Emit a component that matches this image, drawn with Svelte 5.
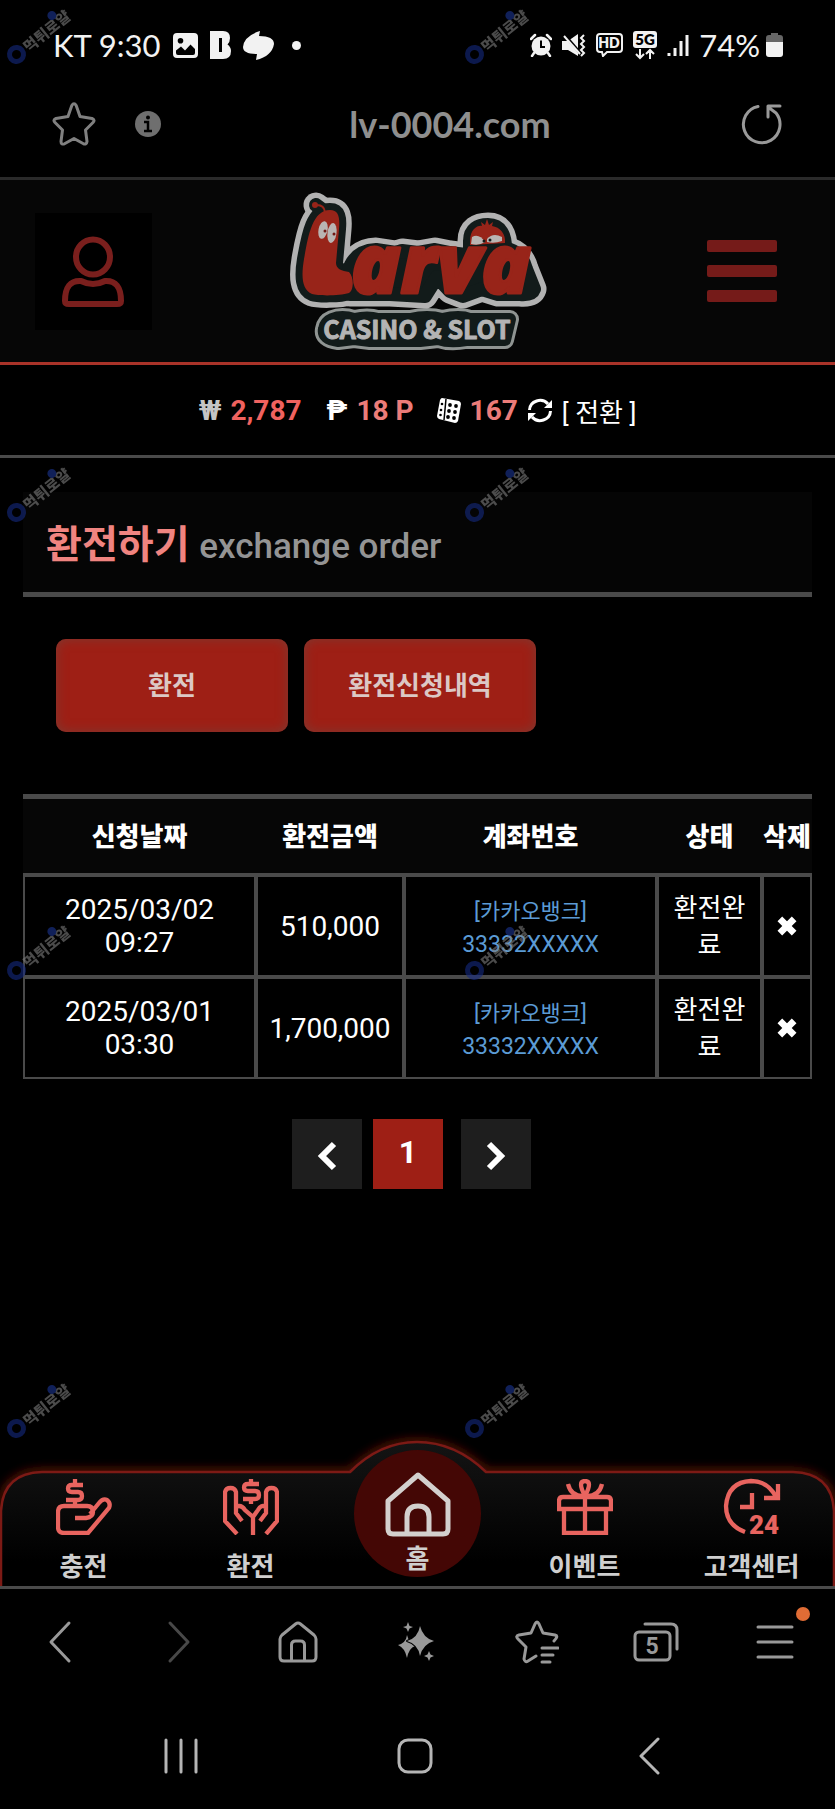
<script lang="ts">
  type Order = { date: string; time: string; amount: number; bank: string; account: string; status: string };

  let orders: Order[] = $state([
    { date: '2025/03/02', time: '09:27', amount: 510000, bank: '카카오뱅크', account: '33332XXXXX', status: '환전완료' },
    { date: '2025/03/01', time: '03:30', amount: 1700000, bank: '카카오뱅크', account: '33332XXXXX', status: '환전완료' },
  ]);

  const headers = ['신청날짜', '환전금액', '계좌번호', '상태', '삭제'];

  const menu = [
    { id: 'charge', label: '충전' },
    { id: 'exchange', label: '환전' },
    { id: 'home', label: '홈' },
    { id: 'event', label: '이벤트' },
    { id: 'support', label: '고객센터' },
  ];

  const stamps = Array.from({ length: 8 }, (_, i) => i);

  function removeOrder(index: number) {
    orders = orders.filter((_, i) => i !== index);
  }
</script>

<div class="screen">
  <div class="status-bar">
    <div class="status-left">
      <span>KT 9:30</span>
      <svg width="25" height="25" viewBox="0 0 25 25" aria-hidden="true">
        <path fill="#f2f2f2" fill-rule="evenodd" d="M4 0H21Q25 0 25 4V21Q25 25 21 25H4Q0 25 0 21V4Q0 0 4 0ZM7.500 5A2.800 2.800 0 1 0 7.500 10.600A2.800 2.800 0 1 0 7.500 5ZM3 17.500V20Q3 22 5 22H20Q22 22 22 20V16L17.500 11.500L12 17.500L8 13.500Z" />
      </svg>
      <svg width="21" height="28" viewBox="0 0 21 28" aria-hidden="true">
        <path fill="#f2f2f2" fill-rule="evenodd" d="M0 0H13Q20 0 20 7Q20 11 17.500 13.500Q21 16 21 20Q21 28 13 28H0ZM9 7V21H12V7Z" />
      </svg>
      <svg class="swirl" width="31" height="29" viewBox="0 0 31 29" aria-hidden="true">
        <path fill="#f2f2f2" d="M17 0L16 5Q31 5 31 13Q29 25 13 29L14 23Q0 23 0 16Q1 5 17 0Z" />
      </svg>
      <i class="more-dot"></i>
    </div>
    <div class="status-right">
      <svg width="22" height="24" viewBox="0 0 22 24" aria-hidden="true">
        <circle cx="11" cy="13" r="9.500" fill="#f2f2f2" />
        <path d="M1 6L5 2M21 6L17 2M4 20L2 23M18 20L20 23" stroke="#f2f2f2" stroke-width="2.500" stroke-linecap="round" />
        <path d="M11 7.500V14H15" fill="none" stroke="#000" stroke-width="2" />
      </svg>
      <svg width="24" height="24" viewBox="0 0 24 24" aria-hidden="true">
        <path fill="#f2f2f2" d="M0 8H6L16 1V23L6 17H0Z" />
        <path d="M1 0L19 21" stroke="#000" stroke-width="3" />
        <path d="M2 3L18 21" stroke="#f2f2f2" stroke-width="2" />
        <path d="M22 2L19 5L22 8L19 11L22 14L19 17L22 20L19 23" fill="none" stroke="#f2f2f2" stroke-width="2" />
      </svg>
      <svg width="27" height="24" viewBox="0 0 27 24" aria-hidden="true">
        <path d="M4 1H23Q26 1 26 4V16Q26 19 23 19H11L7 23L6 19H4Q1 19 1 16V4Q1 1 4 1Z" fill="none" stroke="#f2f2f2" stroke-width="2" />
        <text x="13" y="15" text-anchor="middle" font-size="14" font-weight="800" fill="#f2f2f2">HD</text>
      </svg>
      <svg width="24" height="29" viewBox="0 0 24 29" aria-hidden="true">
        <rect width="24" height="17" rx="3" fill="#f2f2f2" />
        <text x="12" y="14" text-anchor="middle" font-size="15" font-weight="800" fill="#000">5G</text>
        <path d="M7 18V27M3 23L7 27L11 23M17 28V19M13 23L17 19L21 23" fill="none" stroke="#f2f2f2" stroke-width="2" />
      </svg>
      <svg width="22" height="23" viewBox="0 0 22 23" aria-hidden="true">
        <path d="M2 19V22M8 14V22M14 7V22M20 1V22" stroke="#f2f2f2" stroke-width="3" />
      </svg>
      <span class="battery-text">74%</span>
      <svg width="17" height="24" viewBox="0 0 17 24" aria-hidden="true">
        <path fill="#666" d="M5 0H12V2H14Q17 2 17 5V10H0V5Q0 2 3 2H5Z" />
        <path fill="#f2f2f2" d="M0 9H17V21Q17 24 14 24H3Q0 24 0 21Z" />
      </svg>
    </div>
  </div>

  <div class="url-bar">
    <button class="plain" aria-label="즐겨찾기">
      <svg width="44" height="44" viewBox="0 0 44 44">
        <path d="M19.800 3.500Q22 0 24.200 3.500L28 14.500L40 16.500Q43.500 18 41 20.500L33.500 28L35 39.500Q34.500 43 31.500 41.800L22 36.500L12.500 41.800Q9 43 9 39.500L10.500 28L3 20.500Q.5 18 4 16.500L16 14.500Z" fill="none" stroke="#808080" stroke-width="3" stroke-linejoin="round" />
      </svg>
    </button>
    <button class="plain info" aria-label="사이트 정보">
      <svg width="26" height="26" viewBox="0 0 26 26">
        <circle cx="13" cy="13" r="13" fill="#6f6f6f" />
        <path d="M9 11H13V20M9 20H17" fill="none" stroke="#000" stroke-width="2.500" />
        <circle cx="13" cy="6.500" r="2" fill="#000" />
      </svg>
    </button>
    <span class="url">lv-0004.com</span>
    <button class="plain reload" aria-label="새로고침">
      <svg width="42" height="42" viewBox="0 0 42 42">
        <path d="M17 3.500A18.300 18.300 0 1 0 35 10M39 3H27V14M27 4L35 10" fill="none" stroke="#999" stroke-width="3" stroke-linecap="round" stroke-linejoin="round" />
      </svg>
    </button>
  </div>

  <header class="site-header">
    <button class="user" aria-label="내 정보">
      <svg width="64" height="72" viewBox="0 0 64 72">
        <g fill="none" stroke="#7a1f1d" stroke-width="6">
          <ellipse cx="31" cy="22" rx="17" ry="17.500" />
          <path d="M19 46Q31 52 43 46Q59 45 59 66Q59 69 55 69H7Q3 69 3 66Q3 45 19 46Z" stroke-linejoin="round" />
        </g>
      </svg>
    </button>

    <a class="logo" href="#home" aria-label="Larva Casino &amp; Slot">
      <svg width="290" height="180" viewBox="0 0 290 180">
        <defs>
          <path id="worm" d="M60 31C69 31 70 39 69 50L66 84C66 90 72 92 79 93C84 98 84 111 79 114C70 117 48 117 42 115C32 111 31 98 34 80C38 58 42 31 60 31Z" />
          <g id="logo-shape" stroke-linejoin="round" stroke-linecap="round">
            <use href="#worm" />
            <path d="M46 26L54 32" />
            <path d="M200 62C200 50 208 46 218 46C230 46 236 55 235 74L200 76Z" />
            <path d="M78 94Q84 72 106 71L126 74L132 72L148 74L165 71L180 74L212 78Q222 70 240 71Q252 75 256 90L264 110Q262 116 250 115L228 115L212 110L193 117L180 112L167 98L155 117L120 115H80Z" />
          </g>
          <path id="slot-shape" stroke-linejoin="round" d="M62 140Q72 136 84 140Q98 137 108 140H140Q158 136 172 140Q190 136 200 140H240L235 161H196Q180 164 168 160L150 162H100L84 160L68 162Q52 160 54 150Q55 143 62 140Z" />
        </defs>
        <use href="#slot-shape" fill="#8f9492" stroke="#8f9492" stroke-width="18" />
        <use href="#logo-shape" fill="#b2b2b2" stroke="#b2b2b2" stroke-width="25" />
        <use href="#slot-shape" fill="#121b1a" stroke="#121b1a" stroke-width="12" />
        <use href="#logo-shape" fill="#121b1a" stroke="#121b1a" stroke-width="14" />
        <path d="M200 62C200 50 208 46 212 47L211 43L215 46L217 40L219 46L223 43L222 47C230 48 236 55 235 64L200 66Z" fill="#982419" />
        <use href="#worm" fill="#982419" />
        <circle cx="45" cy="26" r="3" fill="#982419" />
        <path d="M45 26Q54 25 55 33" fill="none" stroke="#982419" stroke-width="2" />
        <text class="larva" x="81" y="114">arva</text>
        <g fill="#b9b4b2">
          <ellipse cx="53" cy="51" rx="4.500" ry="9" transform="rotate(12 53 51)" />
          <ellipse cx="62" cy="54" rx="4.500" ry="10" transform="rotate(8 62 54)" />
          <path d="M202 58Q209 54 215 63Q209 67 201 65Z" />
          <path d="M217 60Q223 53 232 58V62Q224 65 217 63Z" />
        </g>
        <circle cx="55" cy="52" r="1.500" fill="#701814" />
        <circle cx="64" cy="55" r="1.500" fill="#701814" />
        <circle cx="214" cy="62" r="1.500" fill="#121b1a" />
        <circle cx="220" cy="61" r="1.500" fill="#121b1a" />
        <text class="slot" x="147" y="160" text-anchor="middle">CASINO &amp; SLOT</text>
      </svg>
    </a>

    <button class="burger" aria-label="메뉴"><i></i><i></i><i></i></button>
  </header>

  <div class="balance">
    <span class="won">₩</span>
    <strong class="cash">2,787</strong>
    <span class="peso">₱</span>
    <strong>18 P</strong>
    <svg class="dice" width="24" height="25" viewBox="0 0 24 25" aria-hidden="true">
      <path fill="#fff" d="M5 0L22 3Q24 4 24 6L21 23Q20 25 18 25L2 21Q0 20 0 18L3 2Q4 0 5 0Z" />
      <path d="M9 1L7 22" stroke="#000" stroke-width="1.500" />
      <g fill="#000">
        <circle cx="13" cy="7" r="1.900" /><circle cx="19" cy="8" r="1.900" />
        <circle cx="12" cy="13" r="1.900" /><circle cx="18" cy="14" r="1.900" />
        <circle cx="11" cy="19" r="1.900" /><circle cx="17" cy="20" r="1.900" />
        <circle cx="5" cy="6" r="1.300" /><circle cx="4" cy="12" r="1.300" /><circle cx="3.500" cy="17" r="1.300" />
      </g>
    </svg>
    <strong>167</strong>
    <button class="convert">
      <svg width="26" height="25" viewBox="0 0 26 25" aria-hidden="true">
        <path d="M2.500 12A10.500 10 0 0 1 21 6M23.500 13A10.500 10 0 0 1 5 19" fill="none" stroke="#fff" stroke-width="3" />
        <path fill="#fff" d="M25 2V10H17ZM1 23V15H9Z" />
      </svg>
      <span>[ 전환 ]</span>
    </button>
  </div>

  <main>
    <h1>환전하기 <small>exchange order</small></h1>

    <div class="actions">
      <button>환전</button>
      <button>환전신청내역</button>
    </div>

    <table>
      <thead>
        <tr>
          {#each headers as header}
            <th scope="col">{header}</th>
          {/each}
        </tr>
      </thead>
      <tbody>
        {#each orders as order, i}
          <tr>
            <td>{order.date}<br />{order.time}</td>
            <td>{order.amount.toLocaleString('en-US')}</td>
            <td class="account"><span class="bank">[{order.bank}]</span><br />{order.account}</td>
            <td class="state">{order.status}</td>
            <td class="remove">
              <button class="plain" aria-label="삭제" onclick={() => removeOrder(i)}>
                <svg width="22" height="22" viewBox="0 0 20 20">
                  <path d="M3.500 3.500L16.500 16.500M16.500 3.500L3.500 16.500" stroke="#fff" stroke-width="6" />
                </svg>
              </button>
            </td>
          </tr>
        {/each}
      </tbody>
    </table>

    <nav class="pager" aria-label="페이지">
      <button aria-label="이전">
        <svg width="20" height="30" viewBox="0 0 20 30"><path d="M17 3L5 15L17 27" fill="none" stroke="#fff" stroke-width="6" /></svg>
      </button>
      <button class="current" aria-current="page">1</button>
      <button aria-label="다음">
        <svg width="20" height="30" viewBox="0 0 20 30"><path d="M3 3L15 15L3 27" fill="none" stroke="#fff" stroke-width="6" /></svg>
      </button>
    </nav>
  </main>

  <nav class="dock">
    <svg class="dock-shape" viewBox="0 0 835 145" preserveAspectRatio="none" aria-hidden="true">
      <defs>
        <linearGradient id="dock-fill" x1="0" y1="0" x2="0" y2="1">
          <stop offset="0" stop-color="#141414" />
          <stop offset="0.300" stop-color="#0d0d0d" />
          <stop offset="0.800" stop-color="#000" />
        </linearGradient>
        <filter id="dock-glow" x="-5%" y="-30%" width="110%" height="160%">
          <feGaussianBlur stdDeviation="5" />
        </filter>
      </defs>
      <path d="M1 150V70Q3 32 42 31H350Q380 1 417 1Q455 1 486 31H793Q832 32 834 70V150" fill="none" stroke="#6e1410" stroke-width="6" filter="url(#dock-glow)" />
      <path d="M1 150V70Q3 32 42 31H350Q380 1 417 1Q455 1 486 31H793Q832 32 834 70V150" fill="url(#dock-fill)" stroke="#7c1a15" stroke-width="2.500" />
    </svg>
    {#each menu as item}
      <a href="#{item.id}" class:home={item.id === 'home'}>
        {#if item.id === 'charge'}
          <svg width="56" height="56" viewBox="0 0 56 56" fill="none" stroke="#e8645f" stroke-width="4.300">
            <path d="M27 6H16Q12 6 12 9.500T16 13H22Q26 13 26 17T22 21H10M19 0V6M19 21V27" />
            <path d="M19 39H30Q37 38 37 33Q37 27 31 27H8Q2 27 2 33V48Q2 54 8 54H32L53 29Q55 24 51 21Q47 19 43 24L34 35" />
          </svg>
        {:else if item.id === 'exchange'}
          <svg width="56" height="56" viewBox="0 0 56 56" fill="none" stroke="#e8645f" stroke-width="4.300">
            <path d="M36 5H25Q21 5 21 8.500T25 12H32Q36 12 36 16T32 20H20M28 0V5M28 20V25" />
            <path d="M14 55L2 42V13Q3 9 7.500 9Q12 9 13 13V34L19 42M13 28Q18 25 22 31L30 38V56M43 55L54 42V13Q53 9 48.500 9Q44 9 43 13V34L37 42M43 28Q38 25 35 31L30 38" />
          </svg>
        {:else if item.id === 'home'}
          <svg width="66" height="66" viewBox="0 0 66 66" fill="none" stroke="#d3d0ce" stroke-width="5">
            <path d="M33 3L63 29V57Q63 62 58 62H8Q3 62 3 57V29ZM22 62V45Q22 34 33 34Q44 34 44 45V62" stroke-linejoin="round" />
          </svg>
        {:else if item.id === 'event'}
          <svg width="56" height="56" viewBox="0 0 56 56" fill="none" stroke="#e8645f" stroke-width="4.300">
            <path d="M2 30V22Q2 18 6 18H50Q54 18 54 22V30ZM7 30V54H49V30M28 17V54M28 17Q20 2 28 2Q36 2 28 17M28 17Q14 18 11 5M28 17Q42 18 45 5" />
          </svg>
        {:else}
          <svg class="support" width="56" height="56" viewBox="0 0 56 56" fill="none" stroke="#e8645f" stroke-width="4.300">
            <path d="M21 53Q2 46 2 27Q4 3 27 2Q44 2 52 18M54 5V19H40M28 14V28H16" />
            <text x="40" y="55" text-anchor="middle" font-size="26" font-weight="900" fill="#e8645f" stroke="none">24</text>
          </svg>
        {/if}
        <span>{item.label}</span>
      </a>
    {/each}
  </nav>

  <div class="browser-bar">
    <button class="plain" aria-label="뒤로">
      <svg width="24" height="44" viewBox="0 0 24 44"><path d="M21 3L3 22L21 41" /></svg>
    </button>
    <button class="plain dim" aria-label="앞으로">
      <svg width="24" height="44" viewBox="0 0 24 44"><path d="M3 3L21 22L3 41" /></svg>
    </button>
    <button class="plain" aria-label="홈페이지">
      <svg width="40" height="42" viewBox="0 0 40 42">
        <path d="M17.500 3Q20 1 22.500 3L36 14Q38 16 38 18V36Q38 40 34 40H6Q2 40 2 36V18Q2 16 4 14ZM13.500 40V24Q13.500 20 17.500 20H22.500Q26.500 20 26.500 24V40" />
      </svg>
    </button>
    <button class="plain" aria-label="AI 도우미">
      <svg class="solid" width="38" height="40" viewBox="0 0 38 40">
        <path d="M9 13Q11 21 17 24Q11 26 9 36Q7 26 0 23Q8 21 9 13ZM10 0L11.500 4L15 5L11.500 6.500L10 10L8.500 6.500L5 5L8.500 4ZM31 29L32.500 32.500L36 34L32.500 35.500L31 39L29.500 35.500L26 34L29.500 32.500Z" />
        <path class="cut" d="M22 4Q25 16 36 19Q25 22 22 34Q20 22 9 19Q20 16 22 4Z" />
      </svg>
    </button>
    <button class="plain" aria-label="북마크">
      <svg width="44" height="44" viewBox="0 0 44 44">
        <path d="M39 21Q44 16 40 15L28 13L24 4Q22 0 20 4L16 13L4 15Q0 16 3 19L11 27L9 39Q10 43 13 41L21 36M27 28H43M27 35H38M27 42H35" />
      </svg>
    </button>
    <button class="plain" aria-label="탭 5개">
      <svg width="46" height="42" viewBox="0 0 46 42">
        <rect x="2" y="11" width="35" height="28" rx="4" />
        <path d="M12 3H38Q44 3 44 9V28" />
        <text x="19" y="33" text-anchor="middle" font-size="23" font-weight="700">5</text>
      </svg>
    </button>
    <button class="plain tools" aria-label="도구">
      <svg width="38" height="38" viewBox="0 0 38 38"><path d="M2 4H36M2 19H36M2 34H36" /></svg>
      <i class="badge"></i>
    </button>
  </div>

  <div class="system-bar">
    <button class="plain" aria-label="최근 앱">
      <svg width="34" height="36" viewBox="0 0 34 36"><path d="M2 2V34M17 2V34M32 2V34" /></svg>
    </button>
    <button class="plain" aria-label="홈 화면">
      <svg width="36" height="36" viewBox="0 0 36 36"><rect x="2" y="2" width="32" height="32" rx="9" /></svg>
    </button>
    <button class="plain" aria-label="이전 화면">
      <svg width="22" height="38" viewBox="0 0 22 38"><path d="M20 2L3 19L20 36" /></svg>
    </button>
  </div>

  <div class="stamps" aria-hidden="true">
    {#each stamps as stamp (stamp)}
      <div class="stamp"><i></i><span>먹튀로얄</span></div>
    {/each}
  </div>
</div>

<style>
  :global(body) {
    background: #000;
  }

  .screen {
    position: relative;
    overflow: hidden;
    background: #000;
    color: #fff;
    font-family: Roboto, 'Noto Sans CJK KR', sans-serif;
  }

  .screen * {
    box-sizing: border-box;
  }

  svg {
    display: block;
    flex: none;
  }

  button {
    font: inherit;
    color: inherit;
    border: 0;
    padding: 0;
    cursor: pointer;
  }

  .plain {
    display: flex;
    background: none;
  }

  a {
    color: inherit;
    text-decoration: none;
  }

  .status-bar {
    display: flex;
    justify-content: space-between;
    align-items: center;
    height: 78px;
    padding: 12px 52px 0 53px;
    font-family: Lato, sans-serif;
    font-size: 31px;
    color: #f2f2f2;
  }

  .status-left,
  .status-right {
    display: flex;
    align-items: center;
    gap: 12px;
  }

  .status-right {
    gap: 10px;
  }

  .battery-text {
    margin-right: -4px;
  }

  .more-dot {
    width: 9px;
    height: 9px;
    margin-left: 6px;
    border-radius: 50%;
    background: #f2f2f2;
  }

  .url-bar {
    display: grid;
    grid-template-columns: 83px 83px 1fr 101px;
    align-items: center;
    height: 102px;
    padding: 0 52px 8px;
    border-bottom: 3px solid #2a2a2a;
  }

  .url {
    text-align: center;
    font-family: Lato, sans-serif;
    font-size: 36px;
    font-weight: 700;
    color: #8f8f8f;
  }

  .reload {
    justify-self: end;
  }

  .site-header {
    display: grid;
    grid-template-columns: 1fr auto 1fr;
    align-items: center;
    height: 185px;
    padding: 0 58px 0 35px;
    background: #060606;
    border-bottom: 3px solid #a93329;
  }

  .user {
    display: grid;
    place-items: center;
    width: 117px;
    height: 117px;
    background: #000;
  }

  .logo {
    margin: -4px 0 0 18px;
  }

  .larva {
    font-family: 'Open Sans', 'Noto Sans', sans-serif;
    font-size: 82px;
    font-style: italic;
    font-weight: 800;
    fill: #982419;
    stroke: #982419;
    stroke-width: 3px;
    stroke-linejoin: round;
  }

  .slot {
    font-family: 'Noto Sans CJK KR', sans-serif;
    font-size: 25px;
    font-weight: 700;
    fill: #b4b4b4;
    stroke: #b4b4b4;
    stroke-width: 1px;
    stroke-linejoin: round;
  }

  .burger {
    display: grid;
    gap: 13px;
    justify-self: end;
    width: 70px;
    background: none;
  }

  .burger i {
    height: 12px;
    border-radius: 2px;
    background: #751b19;
  }

  .balance {
    display: flex;
    justify-content: center;
    align-items: center;
    gap: 9px;
    height: 93px;
    border-bottom: 3px solid #4a4a4a;
    font-size: 28px;
  }

  .balance strong {
    font-weight: 700;
    color: #ec7c79;
  }

  .balance .cash {
    margin-right: 16px;
    color: #f0625f;
  }

  .won {
    font-weight: 700;
    color: #c4c4c4;
  }

  .peso {
    font-weight: 700;
  }

  .dice {
    margin-left: 14px;
  }

  .convert {
    display: flex;
    align-items: center;
    gap: 9px;
    background: none;
    font-size: 26px;
  }

  main {
    padding: 34px 23px 252px;
  }

  h1 {
    height: 105px;
    margin: 0 0 42px;
    padding: 4px 23px 0;
    background: #050505;
    border-bottom: 5px solid #4a4a4a;
    font-size: 39px;
    font-weight: 700;
    line-height: 98px;
    color: #f08480;
  }

  h1 small {
    font-size: 35px;
    font-weight: 500;
    color: #949494;
  }

  .actions {
    display: flex;
    gap: 16px;
    padding-left: 33px;
    margin-bottom: 62px;
  }

  .actions button {
    width: 232px;
    height: 93px;
    padding-bottom: 4px;
    border-radius: 10px;
    background: #9e1f15;
    box-shadow: inset 0 0 12px #7c3a32;
    font-size: 26px;
    font-weight: 700;
    color: #dcc8c5;
  }

  table {
    width: 100%;
    table-layout: fixed;
    border-collapse: separate;
    border-spacing: 0;
    text-align: center;
  }

  th {
    height: 81px;
    padding: 0 0 4px;
    background: #060606;
    border-top: 5px solid #4a4a4a;
    border-bottom: 2px solid #4a4a4a;
    font-size: 26px;
    font-weight: 900;
    white-space: nowrap;
  }

  th:nth-child(1) { width: 233px; }
  th:nth-child(2) { width: 148px; }
  th:nth-child(4) { width: 105px; }
  th:nth-child(5) { width: 50px; }

  td {
    height: 102px;
    padding: 0 10px;
    border: 2px solid #4a4a4a;
    font-size: 28px;
    line-height: 33px;
  }

  .account {
    padding-top: 4px;
    font-size: 23px;
    color: #5b9bd5;
  }

  .bank {
    font-size: 22px;
  }

  .state {
    padding-top: 2px;
    font-size: 26px;
    line-height: 37px;
    word-break: break-all;
  }

  .remove {
    padding: 0;
  }

  .remove button {
    margin: 0 auto;
  }

  .pager {
    display: flex;
    justify-content: center;
    gap: 11px;
    margin: 40px 12px 0 0;
  }

  .pager button {
    display: grid;
    place-items: center;
    width: 70px;
    height: 70px;
    padding-top: 4px;
    background: #1e1e1e;
  }

  .pager .current {
    margin-right: 7px;
    padding: 0 0 4px;
    background: #9e1f15;
    font-size: 32px;
    font-weight: 700;
  }

  .dock {
    position: relative;
    display: grid;
    grid-template-columns: repeat(5, 1fr);
    height: 148px;
    padding-top: 38px;
    border-bottom: 3px solid #4a4a4a;
  }

  .dock-shape {
    position: absolute;
    inset: 0;
    width: 100%;
    height: 145px;
    overflow: visible;
    clip-path: inset(-40px 0 0 0);
  }

  .dock a {
    position: relative;
    display: flex;
    flex-direction: column;
    align-items: center;
    gap: 13px;
    font-size: 26px;
    line-height: 38px;
    font-weight: 700;
    color: #cfcfcf;
  }

  .dock .home {
    justify-self: center;
    width: 127px;
    height: 127px;
    margin-top: -29px;
    padding-top: 22px;
    gap: 4px;
    border-radius: 50%;
    background: #440705;
  }

  .dock .home span {
    line-height: 34px;
  }

  .support {
    overflow: visible;
  }

  .browser-bar {
    display: grid;
    grid-template-columns: repeat(7, 1fr);
    place-items: center;
    height: 106px;
  }

  .browser-bar svg,
  .system-bar svg {
    fill: none;
    stroke: #999;
    stroke-width: 3px;
    stroke-linecap: round;
    stroke-linejoin: round;
  }

  .browser-bar .dim svg {
    stroke: #484848;
  }

  .browser-bar .solid,
  .browser-bar text {
    fill: #999;
    stroke: none;
  }

  .cut {
    stroke: #000;
    stroke-width: 2px;
    paint-order: stroke;
  }

  .tools {
    position: relative;
  }

  .badge {
    position: absolute;
    top: -16px;
    right: -16px;
    width: 14px;
    height: 14px;
    border-radius: 50%;
    background: #e06c35;
  }

  .system-bar {
    display: grid;
    grid-template-columns: repeat(3, 1fr);
    place-items: center;
    height: 115px;
    padding: 6px 69px 0 64px;
  }

  .system-bar svg {
    stroke: #b5b5b5;
  }

  .stamps {
    position: absolute;
    inset: 0;
    display: grid;
    grid-template-columns: repeat(2, 458px);
    grid-auto-rows: 458px;
    overflow: hidden;
    pointer-events: none;
    opacity: 0.6;
  }

  .stamp {
    position: relative;
    display: flex;
    align-items: center;
    gap: 1px;
    width: 70px;
    height: 20px;
    margin: 28px 0 0 1px;
    transform: rotate(-39deg);
    font-size: 15px;
    font-weight: 900;
    color: #7d7d7d;
    white-space: nowrap;
  }

  .stamp i {
    flex: none;
    width: 19px;
    height: 19px;
    border: 5px solid #152a80;
    border-radius: 50%;
  }

  .stamp::after {
    content: '';
    position: absolute;
    top: -2px;
    left: 57px;
    width: 9px;
    height: 9px;
    border-radius: 50%;
    background: #1c3694;
  }
</style>
